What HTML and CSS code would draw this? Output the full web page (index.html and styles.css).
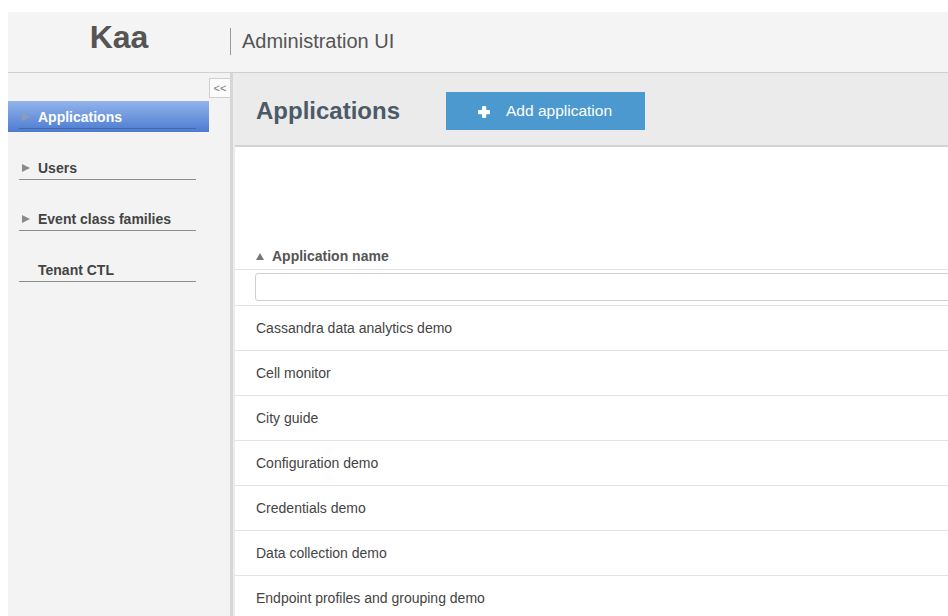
FILE: index.html
```html
<!DOCTYPE html>
<html lang="en">
<head>
<meta charset="utf-8">
<title>Kaa Administration UI</title>
<link rel="stylesheet" href="styles.css">
</head>
<body>
<div class="app">
  <header class="topbar">
    <div class="brand">Kaa</div>
    <div class="subtitle">Administration UI</div>
  </header>
  <div class="workspace">
    <nav class="sidebar">
      <div class="toggle-row"><button class="collapse" type="button">&lt;&lt;</button></div>
      <ul class="nav">
        <li class="nav-item active"><div class="nav-link"><span class="caret"></span>Applications</div></li>
        <li class="nav-item"><div class="nav-link"><span class="caret"></span>Users</div></li>
        <li class="nav-item"><div class="nav-link"><span class="caret"></span>Event class families</div></li>
        <li class="nav-item"><div class="nav-link"><span class="caret blank"></span>Tenant CTL</div></li>
      </ul>
    </nav>
    <div class="splitter"></div>
    <main class="content">
      <div class="page-head">
        <h1 class="page-title">Applications</h1>
        <button class="btn-add" type="button">
          <svg class="plus" width="14" height="14" viewBox="0 0 14 14" aria-hidden="true">
            <rect x="5" y="1" width="4.2" height="12" rx="1" fill="#fff"/>
            <rect x="1" y="5" width="12" height="4.2" rx="1" fill="#fff"/>
          </svg>
          <span>Add application</span>
        </button>
      </div>
      <div class="grid">
        <div class="grid-head"><span class="sort-up"></span>Application name</div>
        <div class="grid-filter"><input class="filter-input" type="text"></div>
        <div class="grid-row">Cassandra data analytics demo</div>
        <div class="grid-row">Cell monitor</div>
        <div class="grid-row">City guide</div>
        <div class="grid-row">Configuration demo</div>
        <div class="grid-row">Credentials demo</div>
        <div class="grid-row">Data collection demo</div>
        <div class="grid-row">Endpoint profiles and grouping demo</div>
      </div>
    </main>
  </div>
</div>
</body>
</html>
```

FILE: styles.css
```css
html, body {
  height: 100%;
}

body {
  margin: 12px 0 0 8px;
  overflow: hidden;
  background: #fff;
  font-family: "Liberation Sans", Arial, sans-serif;
  color: #444;
}

.app {
  min-width: 1000px;
  height: calc(100vh - 12px);
  display: flex;
  flex-direction: column;
}

/* top bar with product name */
.topbar {
  height: 60px;
  flex: none;
  display: flex;
  align-items: baseline;
  background: #f4f4f4;
  border-bottom: 1px solid #cfcfcf;
}

.brand {
  width: 222px;
  margin-top: 9px;
  text-align: center;
  font-size: 32px;
  line-height: 32px;
  font-weight: bold;
  color: #555;
}

.subtitle {
  border-left: 1px solid #9a9a9a;
  padding-left: 11px;
  font-size: 20px;
  line-height: 27px;
  color: #555;
}

.workspace {
  flex: 1;
  display: flex;
  min-height: 0;
}

/* left navigation */
.sidebar {
  width: 222px;
  flex: none;
  background: #f3f3f3;
  padding-top: 5px;
}

.toggle-row {
  display: flex;
  justify-content: flex-end;
}

.collapse {
  width: 21px;
  height: 20px;
  padding: 0;
  border: 1px solid #cfcfcf;
  border-right: none;
  background: #fbfbfb;
  font-family: "Liberation Sans", Arial, sans-serif;
  font-size: 11px;
  color: #777;
  line-height: 18px;
}

.nav {
  list-style: none;
  margin: 3px 0 0;
  padding: 0;
}

.nav-item {
  width: 201px;
  box-sizing: border-box;
  padding: 0 0 3px 11px;
  margin-bottom: 20px;
}

.nav-link {
  width: 177px;
  padding-top: 5px;
  line-height: 22px;
  border-bottom: 1px solid #8c8c8c;
  font-size: 14px;
  font-weight: bold;
  color: #444;
  display: flex;
  align-items: center;
}

.caret {
  width: 0;
  height: 0;
  margin: 0 8px 0 3px;
  border-left: 8px solid #8a8a8a;
  border-top: 4px solid transparent;
  border-bottom: 4px solid transparent;
}

.caret.blank {
  border-left-color: transparent;
}

.nav-item.active {
  background: linear-gradient(#93b4ec, #4c7bd0);
}

.nav-item.active .nav-link {
  color: #fff;
  border-bottom-color: #46679f;
}

.nav-item.active .caret {
  border-left-color: #8d9bb7;
}

.splitter {
  width: 5px;
  flex: none;
  background: linear-gradient(to right, #d7d7d7 0 3px, #ececec 3px 5px);
}

/* main panel */
.content {
  flex: 1;
  background: #fff;
}

.page-head {
  height: 74px;
  box-sizing: border-box;
  padding: 4px 0 0 21px;
  display: flex;
  align-items: center;
  background: #ebebeb;
  border-bottom: 2px solid #d3d3d3;
}

.page-title {
  margin: 0;
  font-size: 24px;
  font-weight: bold;
  color: #4c5a68;
}

.btn-add {
  margin-left: 46px;
  width: 199px;
  height: 38px;
  padding: 0 0 0 31px;
  border: none;
  background: #4b99cf;
  color: #fff;
  font-family: "Liberation Sans", Arial, sans-serif;
  font-size: 15.5px;
  display: inline-flex;
  align-items: center;
  justify-content: flex-start;
  gap: 15px;
}

.plus {
  display: block;
  margin-top: 1px;
}

.grid {
  margin-top: 92px;
}

.grid-head {
  height: 26px;
  padding: 4px 0 0 21px;
  line-height: 26px;
  font-size: 14px;
  font-weight: bold;
  color: #555;
  border-bottom: 1px solid #e3e3e3;
  display: flex;
  align-items: center;
}

.sort-up {
  width: 0;
  height: 0;
  margin-right: 8px;
  border-bottom: 7px solid #777;
  border-left: 4.5px solid transparent;
  border-right: 4.5px solid transparent;
}

.grid-filter {
  padding: 3px 0 4px 20px;
  border-bottom: 1px solid #e3e3e3;
}

.filter-input {
  display: block;
  width: 100%;
  height: 28px;
  box-sizing: border-box;
  border: 1px solid #cfcfcf;
  border-radius: 3px;
  background: #fff;
}

.grid-row {
  height: 44px;
  line-height: 44px;
  padding-left: 21px;
  font-size: 14px;
  color: #444;
  border-bottom: 1px solid #e3e3e3;
}
```
